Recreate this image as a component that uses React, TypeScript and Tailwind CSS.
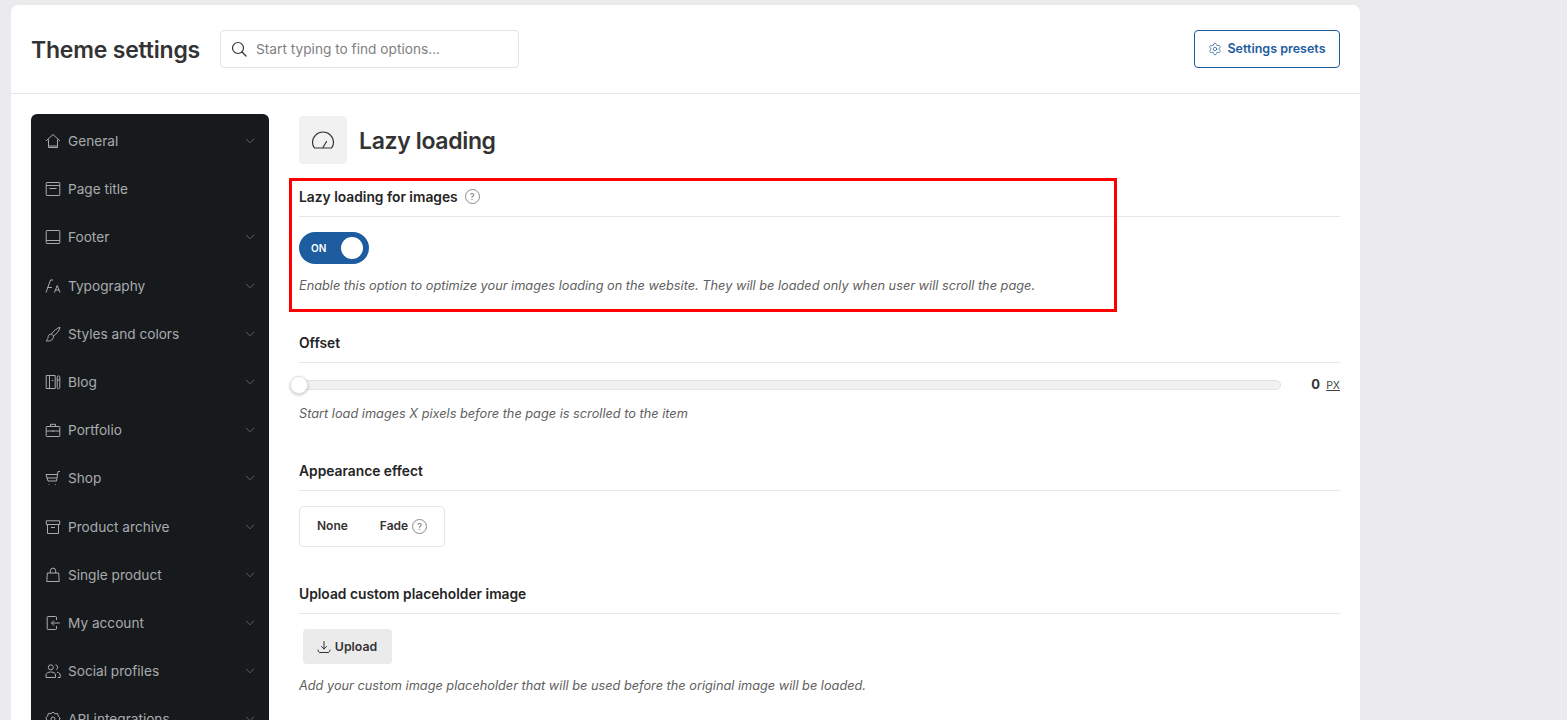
// App.tsx
import type { ReactNode } from 'react'
import { Settings } from 'lucide-react'

const icons: Record<string, ReactNode> = {
  home: <path d="M1 8 8 1.500 15 8M3.500 6.500V14.500h9V6.500M3.500 13h9" />,
  title: <path d="M2 1.500h12a.8.8 0 0 1 .8.8v11.400a.8.800 0 0 1-.8.8H2a.8.800 0 0 1-.8-.8V2.300a.8.800 0 0 1 .8-.8ZM1.200 4.500h13.600M4.500 7.500h7" />,
  footer: <path d="M2 1.500h12a.8.8 0 0 1 .8.8v11.400a.8.800 0 0 1-.8.8H2a.8.800 0 0 1-.8-.8V2.300a.8.800 0 0 1 .8-.8ZM1.200 11.500h13.600" />,
  type: <path d="M1 14.500 5.500 2H8M2.500 9.500H7M9.500 14.500l2.700-7 2.800 7M10.300 12h3.800" />,
  brush: <path d="M15 1.200c-3 .8-6.500 3.800-8.500 6.800l2 2c3-2 6-5.300 6.500-8.800ZM6.500 8C3.800 8 3.300 9.800 3 11.500c-.3 1.700-1 2.700-2 3.300 3 .7 7.300.2 7.500-4.800" />,
  blog: <path d="M1.200 1.500h9v13h-9ZM4.500 1.500v13M6.800 6.500h1.500M12.200 3.200a1.200 1.200 0 0 1 2.600 0v10.300a1.300 1.300 0 0 1-2.600 0ZM12.200 6h2.600" />,
  case: <path d="M2 4.500h12a.8.800 0 0 1 .8.800v8.400a.8.800 0 0 1-.8.800H2a.8.800 0 0 1-.8-.8V5.300a.8.800 0 0 1 .8-.8ZM5.500 4.500V2.300h5v2.200M1.200 9h13.600M8 8v2" />,
  cart: <path d="M15 1.500h-2l-1.500 9.500H3L1 4.500h11.300M1.500 8h10.300M4 14v.7M10.500 14v.7" />,
  archive: <path d="M1.300 1.800h13.400v3.700H1.300ZM2.500 5.500v9h11v-9M6 8.500h4" />,
  bag: <path d="M2.300 6h11.400l.5 8.500H1.800ZM5.300 6V3.800a2.700 2.700 0 0 1 5.400 0V6" />,
  account: <path d="M11.500 5V2.300a.8.800 0 0 0-.8-.8H3a.8.800 0 0 0-.8.8v11.400a.8.800 0 0 0 .8.800h7.700a.8.800 0 0 0 .8-.8V11M14.800 8H6.500M9 5.500 6.500 8 9 10.500" />,
  social: <path d="M5.800 1.800a2.500 2.500 0 1 0 0 5 2.500 2.500 0 0 0 0-5ZM1 14.500V12c0-2 2.200-3 4.800-3s4.700 1 4.700 3v2.500ZM10.500 1.800a2.500 2.500 0 0 1 .6 4.800M12 9.200c2 .3 3.200 1.300 3.200 2.800v2.500h-2.500" />,
  api: <path d="M8 1 10 2.800l2.700-.2.600 2.600 1.900 1.800-1.100 2.400.3 2.700-2.600.8-1.300 2.300L8 14.200l-2.500.8-1.300-2.300-2.600-.8.300-2.700-1.100-2.400 1.900-1.800.6-2.600 2.700.2ZM8 6a2 2 0 1 0 0 4 2 2 0 0 0 0-4Z" />,
}

const navItems = [
  { label: 'General', icon: 'home', arrow: true },
  { label: 'Page title', icon: 'title', arrow: false },
  { label: 'Footer', icon: 'footer', arrow: true },
  { label: 'Typography', icon: 'type', arrow: true },
  { label: 'Styles and colors', icon: 'brush', arrow: true },
  { label: 'Blog', icon: 'blog', arrow: true },
  { label: 'Portfolio', icon: 'case', arrow: true },
  { label: 'Shop', icon: 'cart', arrow: true },
  { label: 'Product archive', icon: 'archive', arrow: true },
  { label: 'Single product', icon: 'bag', arrow: true },
  { label: 'My account', icon: 'account', arrow: true },
  { label: 'Social profiles', icon: 'social', arrow: true },
  { label: 'API integrations', icon: 'api', arrow: true },
]

function Help() {
  return (
    <span className="flex h-[15px] w-[15px] items-center justify-center rounded-full border border-[#8a8a8a] text-[9px] font-medium leading-none text-[#777]">
      ?
    </span>
  )
}

function SectionTitle({ children }: { children: ReactNode }) {
  return (
    <div className="flex h-[30px] items-start gap-[6px] border-b border-[#e6e6e6] text-[13.8px] font-semibold leading-5 text-[#242424]">
      {children}
    </div>
  )
}

function Hint({ children }: { children: ReactNode }) {
  return <p className="text-[12.75px] italic leading-[19px] text-[#5f5f5f]">{children}</p>
}

export default function App() {
  return (
    <div className="h-[720px] overflow-hidden bg-[#ebebed] pl-[11px] pt-[5px] font-['Inter',sans-serif]">
      <div className="w-[1349px] rounded-t-[7px] bg-white">
        {/* Header */}
        <div className="flex h-[89px] items-center border-b border-[#e6e6e6] px-5">
          <h1 className="pt-[2px] text-[23px] font-semibold leading-none tracking-[-0.2px] text-[#333]">Theme settings</h1>
          <div className="ml-5 flex h-[38px] w-[299px] items-center gap-[9px] rounded-[4px] border border-[#e3e3e3] pl-[10px]">
            <svg width="16" height="16" viewBox="0 0 16 16" fill="none" stroke="#333" strokeWidth="1.200" strokeLinecap="round">
              <circle cx="7" cy="7" r="5.500" />
              <path d="m11 11 4 4" />
            </svg>
            <span className="text-[13.7px] text-[#808080]">Start typing to find options...</span>
          </div>
          <button className="ml-auto flex h-[38px] w-[146px] items-center justify-center gap-[5px] rounded-[4px] border border-[#1e5ca0] text-[12.5px] font-semibold text-[#1e5ca0]">
            <Settings size={14} strokeWidth={1.2} />
            Settings presets
          </button>
        </div>

        <div className="flex items-start gap-[30px] px-5 pt-5">
          {/* Sidebar */}
          <nav className="w-[238px] shrink-0 rounded-[6px] bg-[#171a1d] pt-[3px]">
            {navItems.map((item) => (
              <div key={item.label} className="flex h-[48.2px] items-center pl-[14px] pr-[14px] text-[#a8abae]">
                <svg width="16" height="16" viewBox="0 0 16 16" fill="none" stroke="currentColor" strokeWidth="1">
                  {icons[item.icon]}
                </svg>
                <span className="ml-[7px] text-[13.65px] leading-5">{item.label}</span>
                {item.arrow && (
                  <svg className="ml-auto" width="10" height="6" viewBox="0 0 10 6" fill="none" stroke="#5b5f63" strokeWidth="1">
                    <path d="m1 .8 4 4 4-4" />
                  </svg>
                )}
              </div>
            ))}
          </nav>

          {/* Content */}
          <div className="relative min-w-0 flex-1 pt-[2px]">
            <div className="flex items-center gap-3">
              <div className="flex h-12 w-12 items-center justify-center rounded-[4px] bg-[#f1f1f1]">
                <svg width="24" height="24" viewBox="0 0 24 24" fill="none" stroke="#333" strokeWidth="1.200" strokeLinecap="round">
                  <path d="M3.500 20h17c1.200-1.500 2-3.500 2-5.500a10.500 10.500 0 0 0-21 0c0 2 .8 4 2 5.500Z" />
                  <path d="m12 19.500 3.500-6" />
                </svg>
              </div>
              <h2 className="pt-[2px] text-[23px] font-semibold leading-none tracking-[-0.35px] text-[#333]">Lazy loading</h2>
            </div>

            {/* Lazy loading for images */}
            <section className="mt-[23px]">
              <SectionTitle>
                Lazy loading for images
                <span className="ml-[1px] mt-[2px]"><Help /></span>
              </SectionTitle>
              <div className="mt-[15px] flex h-8 w-[70px] items-center justify-between rounded-full bg-[#1e5ca0] pl-3 pr-[6px]">
                <span className="text-[10px] font-semibold text-white">ON</span>
                <span className="h-[22px] w-[22px] rounded-full bg-white" />
              </div>
              <div className="mt-[12px]">
                <Hint>Enable this option to optimize your images loading on the website. They will be loaded only when user will scroll the page.</Hint>
              </div>
            </section>

            {/* Offset */}
            <section className="mt-[38px]">
              <SectionTitle>Offset</SectionTitle>
              <div className="mt-[13px] flex h-[18px] items-center justify-between">
                <div className="relative h-[10px] w-[982px] rounded-full border border-[#e2e2e2] bg-[#f1f1f1]">
                  <span className="absolute left-[-10px] top-[-5px] h-[18px] w-[18px] rounded-full border border-[#e4e4e4] bg-white shadow-[0_1px_3px_rgba(0,0,0,0.25)]" />
                </div>
                <div className="flex items-baseline gap-[6px]">
                  <span className="text-[13px] font-bold text-[#333]">0</span>
                  <span className="text-[10.5px] text-[#444] underline">PX</span>
                </div>
              </div>
              <div className="mt-[10px]">
                <Hint>Start load images X pixels before the page is scrolled to the item</Hint>
              </div>
            </section>

            {/* Appearance effect */}
            <section className="mt-[38px]">
              <SectionTitle>Appearance effect</SectionTitle>
              <div className="mt-[15px] flex h-[41px] w-[146px] items-center rounded-[4px] border border-[#e6e6e6] pb-[1px] pl-[17px] text-[12px] font-semibold text-[#333]">
                None
                <span className="ml-[32px]">Fade</span>
                <span className="ml-1"><Help /></span>
              </div>
            </section>

            {/* Upload */}
            <section className="mt-[37px]">
              <SectionTitle>Upload custom placeholder image</SectionTitle>
              <button className="ml-1 mt-[15px] flex h-[35px] w-[89px] items-center justify-center gap-[4px] rounded-[4px] bg-[#ebebeb] pr-[1px] pt-[1px] text-[12.3px] font-semibold text-[#333]">
                <svg width="14" height="14" viewBox="0 0 14 14" fill="none" stroke="#333" strokeWidth="1" strokeLinecap="round">
                  <path d="M7 1.500v7.500M4.500 6.500 7 9l2.500-2.500M1 10c0 1.500.8 2.500 2 2.500h8c1.200 0 2-1 2-2.500" />
                </svg>
                Upload
              </button>
              <div className="mt-[12px]">
                <Hint>Add your custom image placeholder that will be used before the original image will be loaded.</Hint>
              </div>
            </section>

            {/* Red highlight */}
            <div className="absolute left-[-10px] top-[64px] h-[134px] w-[828px] border-[3px] border-[#ff0000]" />
          </div>
        </div>
      </div>
    </div>
  )
}
